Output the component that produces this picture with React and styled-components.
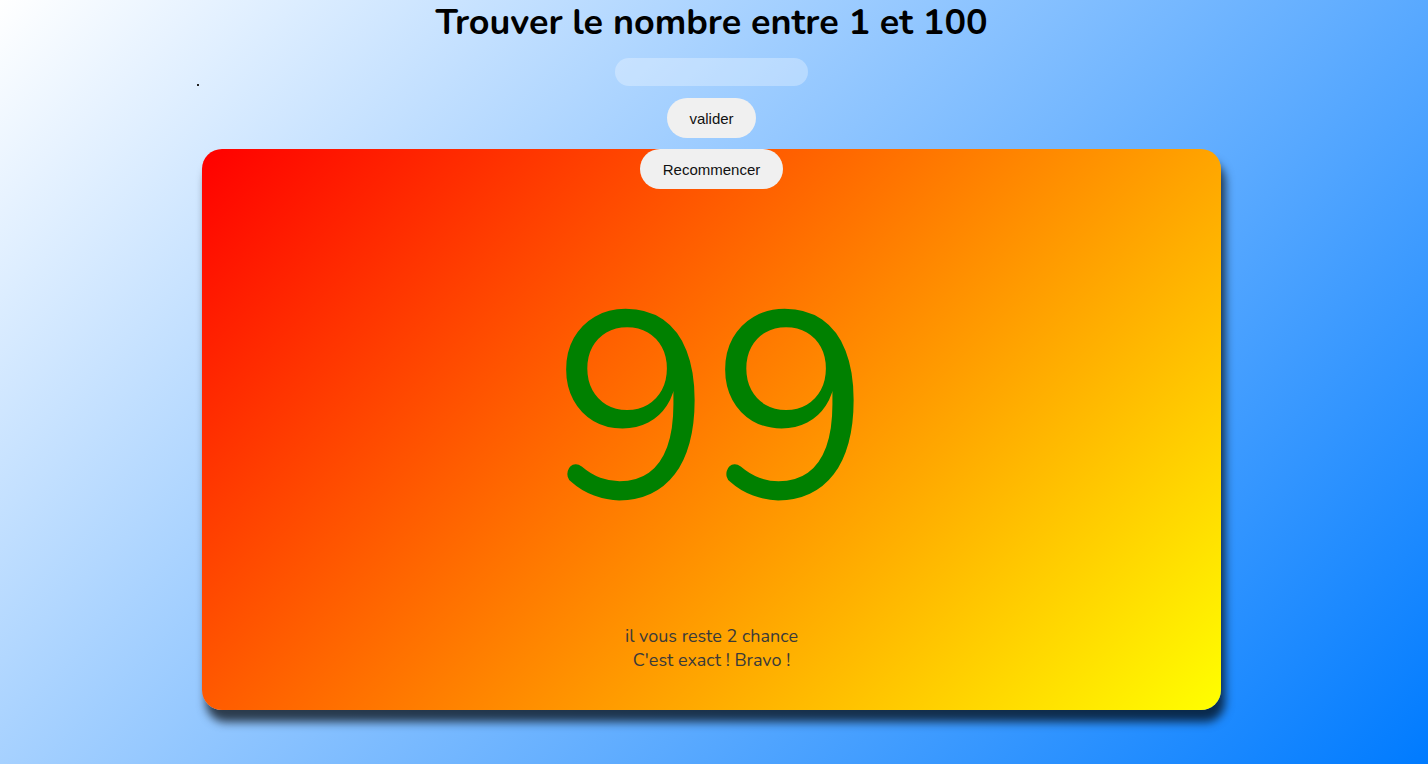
import React, { useState } from "react";
import styled, { createGlobalStyle } from "styled-components";

const GlobalStyle = createGlobalStyle`
  html, body {
    margin: 0;
    padding: 0;
    height: 100%;
  }
  body {
    background: linear-gradient(135deg, #ffffff 0%, #007bff 100%);
    font-family: "Nunito", "Lato", sans-serif;
    overflow: hidden;
  }
`;

const Page = styled.div`
  display: flex;
  flex-direction: column;
  align-items: center;
  min-height: 100vh;
  padding-right: 5px;
`;

const Title = styled.h1`
  margin: 0;
  padding-top: 3px;
  font-size: 36px;
  font-weight: 700;
  line-height: 40px;
  color: #000;
`;

const FormRow = styled.div`
  width: 1030px;
  margin-top: 15px;
  display: grid;
  grid-template-columns: 1fr auto 1fr;
  align-items: end;
`;

const Dot = styled.span`
  justify-self: start;
  width: 2px;
  height: 2px;
  background: #222;
`;

const Input = styled.input`
  width: 193px;
  height: 28px;
  box-sizing: border-box;
  border: none;
  outline: none;
  border-radius: 14px;
  background: rgba(255, 255, 255, 0.3);
  padding: 0 14px;
  font-size: 15px;
`;

const Button = styled.button`
  cursor: pointer;
  height: 40px;
  padding: 0 ${p => p.pad || "22px"};
  border: none;
  border-radius: 20px;
  background: #f0f0f0;
  color: #111;
  font-family: "Liberation Sans", Arial, sans-serif;
  font-size: 15px;
  margin-top: ${p => p.top || "0"};
`;

const Card = styled.div`
  width: 1019px;
  height: 561px;
  margin-top: 11px;
  border-radius: 20px;
  background: linear-gradient(135deg, #ff0000 0%, #ffff00 100%);
  box-shadow: 4px 12px 10px rgba(0, 0, 0, 0.7);
  display: flex;
  flex-direction: column;
  align-items: center;
`;

const Number = styled.div`
  margin-top: 72px;
  font-size: 265px;
  line-height: 300px;
  color: #008000;
  font-weight: 400;
`;

const Message = styled.p`
  margin: 0;
  font-size: 18px;
  line-height: 24px;
  color: #3a3a3a;
  margin-top: ${p => p.top || "0"};
`;

export default function App() {
  const [guess, setGuess] = useState("");
  return (
    <Page>
      <GlobalStyle />
      <Title>Trouver le nombre entre 1 et 100</Title>
      <FormRow>
        <Dot />
        <Input value={guess} onChange={e => setGuess(e.target.value)} />
        <span />
      </FormRow>
      <Button top="12px">valider</Button>
      <Card>
        <Button pad="23px">Recommencer</Button>
        <Number>99</Number>
        <Message top="63px">il vous reste 2 chance</Message>
        <Message>C'est exact ! Bravo !</Message>
      </Card>
    </Page>
  );
}
